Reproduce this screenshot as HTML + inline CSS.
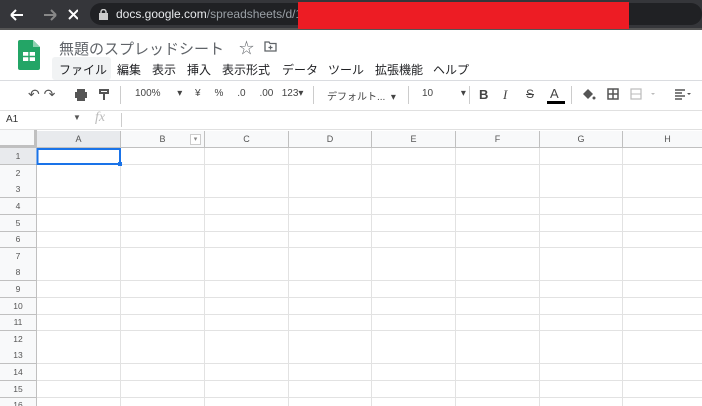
<!DOCTYPE html>
<html><head><meta charset="utf-8"><style>
*{margin:0;padding:0;box-sizing:border-box}
body{width:702px;height:406px;overflow:hidden;background:#fff;font-family:"Liberation Sans","Noto Sans CJK JP",sans-serif;position:relative}
.a{position:absolute}
.t{position:absolute;white-space:nowrap}
.menu span{position:absolute;top:61px;font-size:12px;color:#202124}
.tb{position:absolute;top:88px;font-size:10px;color:#444}
.ch{position:absolute;top:131px;height:17px;font-size:9px;color:#555;text-align:center;line-height:17px;border-right:1px solid #c0c0c0;background:#f8f9fa}
</style></head><body>
<div class="a" style="left:0;top:0;width:702px;height:29px;background:#35363a"></div>
<div class="a" style="left:90px;top:3px;width:612px;height:22px;border-radius:11px;background:#202124"></div>
<div class="a" style="left:0;top:28px;width:702px;height:2px;background:#555"></div>
<svg class="a" style="left:8px;top:7px" width="70" height="16"><path d="M3 8h12M3 8l5-5M3 8l5 5" stroke="#fff" stroke-width="2" fill="none"/><path d="M36 8h12M48 8l-5-5M48 8l-5 5" stroke="#888" stroke-width="2" fill="none"/><path d="M61 3l9 9M70 3l-9 9" stroke="#fff" stroke-width="2"/></svg>
<svg class="a" style="left:99px;top:9px" width="9" height="11"><rect x="0" y="4" width="9" height="7" fill="#ccc"/><path d="M2 5V3a2.5 2.5 0 0 1 5 0v2" stroke="#ccc" fill="none" stroke-width="1.5"/></svg>
<div class="t" style="left:116px;top:7px;font-size:12px;color:#e8eaed">docs.google.com<span style="color:#9aa0a6">/spreadsheets/d/1</span></div>
<div class="a" style="left:298px;top:2px;width:331px;height:27px;background:#ed1c24"></div>
<svg class="a" style="left:18px;top:40px" width="22" height="30"><path d="M0 2a2 2 0 0 1 2-2h13l7 7v21a2 2 0 0 1-2 2H2a2 2 0 0 1-2-2z" fill="#23a566"/><path d="M15 0v7h7z" fill="#8ed1b1"/><rect x="5" y="12" width="12" height="9" fill="#fff"/><path d="M5 16.5h12M11 12v9" stroke="#23a566" stroke-width="1.4"/></svg>
<div class="t" style="left:59px;top:38px;font-size:15px;color:#5f6368">無題のスプレッドシート</div>
<div class="t" style="left:239px;top:37px;font-size:15px;color:#5f6368">☆</div>
<svg class="a" style="left:264px;top:41px" width="13" height="11"><path d="M1 1h4l1 1.5h6V10H1z" fill="none" stroke="#5f6368" stroke-width="1.3"/><path d="M6.5 4.5v4M4.5 6.5h4" stroke="#5f6368" stroke-width="1.2"/></svg>
<div class="a" style="left:52px;top:57px;width:59px;height:23px;background:#f1f3f4;border-radius:3px"></div>
<div class="menu"><span style="left:59px">ファイル</span><span style="left:117px">編集</span><span style="left:152px">表示</span><span style="left:187px">挿入</span><span style="left:222px">表示形式</span><span style="left:282px">データ</span><span style="left:328px">ツール</span><span style="left:375px">拡張機能</span><span style="left:433px">ヘルプ</span></div>
<div class="a" style="left:0;top:80px;width:702px;height:1px;background:#dadce0"></div>
<div class="t" style="left:28px;top:86px;font-size:14px;color:#555">↶ ↷</div>
<svg class="a" style="left:74px;top:89px" width="36" height="12"><rect x="1" y="3" width="12" height="6" fill="#555"/><rect x="3" y="0" width="8" height="3" fill="#555"/><rect x="3" y="8" width="8" height="4" fill="#555"/><path d="M26 1h8v3h-8zM30 4v7" stroke="#555" stroke-width="2" fill="none"/></svg>
<div class="a" style="left:120px;top:86px;width:1px;height:18px;background:#ccc"></div>
<div class="tb" style="left:135px">100% &nbsp;&nbsp;&nbsp;&nbsp;&nbsp;▾</div>
<div class="tb" style="left:195px">¥ &nbsp;&nbsp;&nbsp;&nbsp;%&nbsp;&nbsp;&nbsp;&nbsp; .0&nbsp;&nbsp;&nbsp;&nbsp; .00&nbsp;&nbsp; 123▾</div>
<div class="a" style="left:313px;top:86px;width:1px;height:18px;background:#ccc"></div>
<div class="tb" style="left:327px">デフォルト... &nbsp;▾</div>
<div class="a" style="left:408px;top:86px;width:1px;height:18px;background:#ccc"></div>
<div class="tb" style="left:422px">10 &nbsp;&nbsp;&nbsp;&nbsp;&nbsp;&nbsp;&nbsp;&nbsp;&nbsp;▾</div>
<div class="a" style="left:469px;top:86px;width:1px;height:18px;background:#ccc"></div>
<div class="t" style="left:479px;top:87px;font-size:13px;color:#444;font-weight:bold">B</div>
<div class="t" style="left:503px;top:87px;font-size:13px;color:#444;font-style:italic;font-family:'Liberation Serif',serif">I</div>
<div class="t" style="left:526px;top:87px;font-size:12px;color:#444;text-decoration:line-through">S</div>
<div class="t" style="left:550px;top:86px;font-size:13px;color:#444">A</div>
<div class="a" style="left:547px;top:101px;width:18px;height:3px;background:#000"></div>
<div class="a" style="left:571px;top:86px;width:1px;height:18px;background:#ccc"></div>
<svg class="a" style="left:581px;top:88px" width="110" height="13"><path d="M2 6l5-5 5 5-5 5z" fill="#555"/><circle cx="13" cy="10" r="1.5" fill="#555"/><rect x="27" y="1" width="10" height="10" fill="none" stroke="#555" stroke-width="1.5"/><path d="M32 1v10M27 6h10" stroke="#555" stroke-width="1.5"/><rect x="50" y="1" width="10" height="10" fill="none" stroke="#bbb" stroke-width="1.2"/><path d="M50 6h10" stroke="#bbb"/><path d="M70 5l2 2 2-2" fill="#bbb"/><path d="M94 2h10M94 5h7M94 8h10M94 11h7" stroke="#555" stroke-width="1.4"/><path d="M106 5l2 2 2-2z" fill="#555"/></svg>
<div class="a" style="left:0;top:110px;width:702px;height:1px;background:#e0e0e0"></div>
<div class="t" style="left:6px;top:114px;font-size:10px;color:#333">A1</div>
<div class="t" style="left:73px;top:113px;font-size:8px;color:#555">▼</div>
<div class="t" style="left:95px;top:110px;font-size:14px;color:#bbb;font-style:italic;font-family:'Liberation Serif',serif">fx</div>
<div class="a" style="left:121px;top:113px;width:1px;height:14px;background:#ccc"></div>
<div class="a" style="left:0;top:129px;width:702px;height:1px;background:#e0e0e0"></div>
<div class="a" style="left:0;top:130px;width:37px;height:18px;background:#f8f9fa;border-right:3px solid #c0c0c0;border-bottom:3px solid #c0c0c0"></div>
<div class="ch" style="left:37px;width:84px;background:#e8eaed">A</div>
<div class="ch" style="left:121px;width:84px">B</div>
<div class="a" style="left:190px;top:134px;width:11px;height:11px;border:1px solid #ccc;background:#fff;font-size:7px;color:#888;text-align:center;line-height:9px">▾</div>
<div class="ch" style="left:205px;width:84px">C</div>
<div class="ch" style="left:289px;width:83px">D</div>
<div class="ch" style="left:372px;width:84px">E</div>
<div class="ch" style="left:456px;width:84px">F</div>
<div class="ch" style="left:540px;width:83px">G</div>
<div class="ch" style="left:623px;width:90px">H</div>
<div class="a" style="left:0;top:147px;width:702px;height:1px;background:#c0c0c0"></div>
<div class="a" style="left:0;top:148px;width:37px;height:258px;background:#f8f9fa;border-right:1px solid #c0c0c0"></div>
<div class="a" style="left:0;top:148px;width:37px;height:17px;background:#e8eaed"></div>
<svg class="a" style="left:0;top:148px" width="702" height="258">
<g stroke="#e2e2e2" stroke-width="1">
<path d="M120.5 0V258M204.5 0V258M288.5 0V258M371.5 0V258M455.5 0V258M539.5 0V258M622.5 0V258"/>
<path d="M37 16.5H702M37 49.5H702M37 66.5H702M37 83.5H702M37 99.5H702M37 132.5H702M37 149.5H702M37 166.5H702M37 182.5H702M37 215.5H702M37 232.5H702M37 249.5H702"/>
</g>
<g stroke="#c0c0c0"><path d="M0 16.5H37M0 49.5H37M0 66.5H37M0 83.5H37M0 99.5H37M0 132.5H37M0 149.5H37M0 166.5H37M0 182.5H37M0 215.5H37M0 232.5H37M0 249.5H37"/></g>
<rect x="37.5" y="1" width="82.5" height="15" fill="none" stroke="#1a73e8" stroke-width="2"/>
<rect x="118" y="14" width="4" height="4" fill="#1a73e8"/>
<g font-family="Liberation Sans" font-size="8.5" fill="#555" text-anchor="middle">
<text x="18" y="11">1</text><text x="18" y="28">2</text><text x="18" y="44">3</text><text x="18" y="61">4</text><text x="18" y="78">5</text><text x="18" y="94">6</text><text x="18" y="111">7</text><text x="18" y="127">8</text><text x="18" y="144">9</text><text x="18" y="161">10</text><text x="18" y="177">11</text><text x="18" y="194">12</text><text x="18" y="210">13</text><text x="18" y="227">14</text><text x="18" y="244">15</text><text x="18" y="260">16</text>
</g>
</svg>
</body></html>
